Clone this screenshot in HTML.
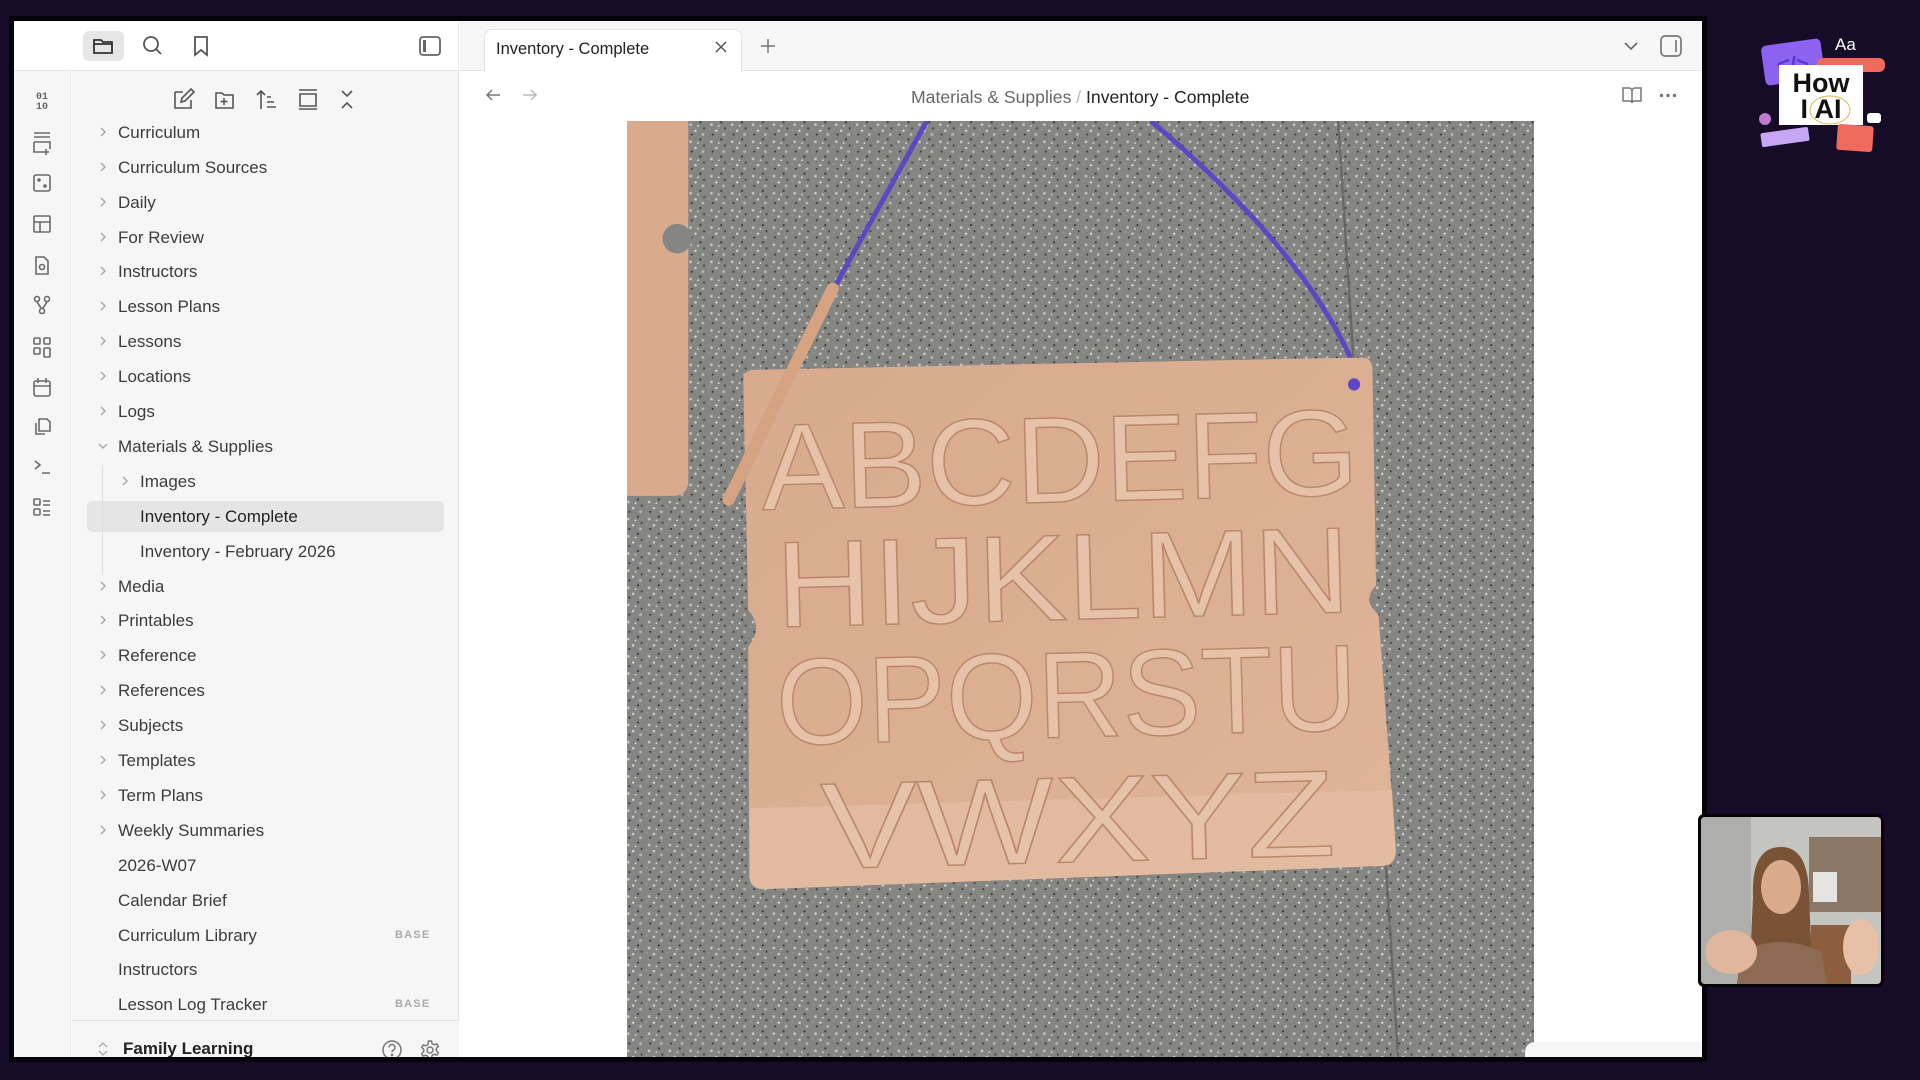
<!DOCTYPE html>
<html><head><meta charset="utf-8"><style>
*{box-sizing:border-box;margin:0;padding:0}
body{width:1920px;height:1080px;background:#170c28;position:relative;overflow:hidden;font-family:"Liberation Sans",sans-serif}
.win{position:absolute;left:14px;top:21px;width:1688px;height:1036px;background:#fff;overflow:hidden;outline:5px solid #050308}
.abs{position:absolute}
.rib{left:0;top:50px;width:57px;height:986px;background:#f6f6f6;border-right:1px solid #e6e6e6}
.side{left:58px;top:50px;width:387px;height:986px;background:#f6f6f6;border-right:1px solid #e4e4e4}
.topl{left:0;top:0;width:445px;height:50px;background:#fff;border-bottom:1px solid #e6e6e6;border-right:1px solid #eee}
.row{position:absolute;left:0;height:35px;line-height:35px;font-size:17px;color:#3c3c3c;white-space:nowrap}
.row svg{position:absolute;top:11px}
.base{position:absolute;left:381px;font-size:11px;color:#aaa;letter-spacing:1.2px;font-weight:bold}
.ic{position:absolute}
</style></head><body>
<div class="win">
 <div class="abs topl"></div>
 <div class="abs" style="left:69px;top:10px;width:41px;height:30px;background:#e6e6e6;border-radius:6px"></div>
 <svg class="ic" style="left:78px;top:14px" width="22" height="22" viewBox="0 0 22 22" fill="none" stroke="#333" stroke-width="1.8"><path d="M2 5h7l2 2h9v11H2z M2 9h18"/></svg>
 <svg class="ic" style="left:127px;top:13px" width="24" height="24" viewBox="0 0 24 24" fill="none" stroke="#555" stroke-width="1.8"><circle cx="10" cy="10" r="7"/><path d="M15 15l5 5"/></svg>
 <svg class="ic" style="left:176px;top:13px" width="22" height="24" viewBox="0 0 22 24" fill="none" stroke="#555" stroke-width="1.8"><path d="M5 3h12v18l-6-5-6 5z"/></svg>
 <svg class="ic" style="left:404px;top:13px" width="24" height="24" viewBox="0 0 24 24" fill="none" stroke="#666" stroke-width="1.8"><rect x="2" y="3" width="20" height="18" rx="3"/><rect x="5" y="6" width="3" height="12" fill="#666" stroke="none"/></svg>
 <div class="abs rib"></div>
 <svg class="ic" style="left:16px;top:64px" width="24" height="460" viewBox="0 0 24 460" fill="none" stroke="#6a6a6a" stroke-width="1.6">
  <text x="12" y="14" font-size="10" text-anchor="middle" fill="#666" stroke="none" font-weight="bold" font-family="Liberation Mono">01</text><text x="12" y="24" font-size="10" text-anchor="middle" fill="#666" stroke="none" font-weight="bold" font-family="Liberation Mono">10</text>
  <path d="M4 48h16M4 52h16M4 57h16v7M4 57v10h9M16 64v6M13 67h6"/>
  <rect x="4" y="90" width="16" height="16" rx="2"/><circle cx="9" cy="95" r="1" fill="#666"/><circle cx="15" cy="101" r="1" fill="#666"/>
  <rect x="4" y="131" width="16" height="16" rx="1"/><path d="M4 137h16M10 137v10"/>
  <path d="M6 172h8l4 4v13H6z"/><circle cx="12" cy="182" r="2.5"/>
  <circle cx="7" cy="214" r="2.5"/><circle cx="17" cy="214" r="2.5"/><circle cx="12" cy="226" r="2.5"/><path d="M7 217l4 6M17 217l-4 6"/>
  <rect x="4" y="253" width="6" height="6" rx="1"/><rect x="14" y="253" width="6" height="6" rx="1"/><rect x="4" y="263" width="6" height="6" rx="1"/><rect x="14" y="263" width="6" height="9" rx="1"/>
  <rect x="4" y="296" width="16" height="15" rx="2"/><path d="M4 301h16M8 293v5M16 293v5"/>
  <path d="M9 334h8l3 3v9H9z M6 338v11h9"/>
  <path d="M5 376l5 4-5 4M12 388h8"/>
  <rect x="4" y="414" width="6" height="6" rx="1"/><rect x="4" y="424" width="6" height="6" rx="1"/><path d="M13 416h7M13 420h7M13 426h7M13 430h7"/>
 </svg>
 <div class="abs side">
  <svg class="ic" style="left:100px;top:16px" width="260" height="24" viewBox="0 0 260 24" fill="none" stroke="#555" stroke-width="1.6">
   <path d="M3 5h8M3 5v16h16v-8M9 15l1-4 9-9 3 3-9 9z"/>
   <path d="M44 6h6l2 2h9v13H44z M52 11v7M48.5 14.5h7"/>
   <path d="M89 4v18M85 8l4-4 4 4M95 10h4M95 15h7M95 20h9"/>
   <path d="M127 3h18M128 7h16v12h-16z M127 22h18"/>
   <path d="M170 4l5 5 5-5M170 21l5-5 5 5"/>
  </svg>
  <div class="abs" style="left:15px;top:430px;width:357px;height:31px;background:#e5e5e5;border-radius:5px"></div>
  <div class="abs" style="left:30px;top:394px;width:1px;height:110px;background:#ddd"></div>
 </div>
 <div class="abs" style="left:58px;top:-21px;width:387px;height:1020px;overflow:hidden">
  <div class="row" style="top:114.8px"><svg style="left:25px" width="12" height="12" viewBox="0 0 12 12"><path d="M4 2l4 4-4 4" stroke="#aaa" fill="none" stroke-width="1.5"/></svg><span style="position:absolute;left:46px">Curriculum</span></div>
  <div class="row" style="top:149.7px"><svg style="left:25px" width="12" height="12" viewBox="0 0 12 12"><path d="M4 2l4 4-4 4" stroke="#aaa" fill="none" stroke-width="1.5"/></svg><span style="position:absolute;left:46px">Curriculum Sources</span></div>
  <div class="row" style="top:184.6px"><svg style="left:25px" width="12" height="12" viewBox="0 0 12 12"><path d="M4 2l4 4-4 4" stroke="#aaa" fill="none" stroke-width="1.5"/></svg><span style="position:absolute;left:46px">Daily</span></div>
  <div class="row" style="top:219.5px"><svg style="left:25px" width="12" height="12" viewBox="0 0 12 12"><path d="M4 2l4 4-4 4" stroke="#aaa" fill="none" stroke-width="1.5"/></svg><span style="position:absolute;left:46px">For Review</span></div>
  <div class="row" style="top:254.4px"><svg style="left:25px" width="12" height="12" viewBox="0 0 12 12"><path d="M4 2l4 4-4 4" stroke="#aaa" fill="none" stroke-width="1.5"/></svg><span style="position:absolute;left:46px">Instructors</span></div>
  <div class="row" style="top:289.3px"><svg style="left:25px" width="12" height="12" viewBox="0 0 12 12"><path d="M4 2l4 4-4 4" stroke="#aaa" fill="none" stroke-width="1.5"/></svg><span style="position:absolute;left:46px">Lesson Plans</span></div>
  <div class="row" style="top:324.2px"><svg style="left:25px" width="12" height="12" viewBox="0 0 12 12"><path d="M4 2l4 4-4 4" stroke="#aaa" fill="none" stroke-width="1.5"/></svg><span style="position:absolute;left:46px">Lessons</span></div>
  <div class="row" style="top:359.1px"><svg style="left:25px" width="12" height="12" viewBox="0 0 12 12"><path d="M4 2l4 4-4 4" stroke="#aaa" fill="none" stroke-width="1.5"/></svg><span style="position:absolute;left:46px">Locations</span></div>
  <div class="row" style="top:394px"><svg style="left:25px" width="12" height="12" viewBox="0 0 12 12"><path d="M4 2l4 4-4 4" stroke="#aaa" fill="none" stroke-width="1.5"/></svg><span style="position:absolute;left:46px">Logs</span></div>
  <div class="row" style="top:428.9px"><svg style="left:25px" width="12" height="12" viewBox="0 0 12 12"><path d="M2 4l4 4 4-4" stroke="#aaa" fill="none" stroke-width="1.5"/></svg><span style="position:absolute;left:46px">Materials &amp; Supplies</span></div>
  <div class="row" style="top:463.8px"><svg style="left:47px" width="12" height="12" viewBox="0 0 12 12"><path d="M4 2l4 4-4 4" stroke="#aaa" fill="none" stroke-width="1.5"/></svg><span style="position:absolute;left:68px">Images</span></div>
  <div class="row" style="top:498.7px;color:#222"><span style="position:absolute;left:68px">Inventory - Complete</span></div>
  <div class="row" style="top:533.6px"><span style="position:absolute;left:68px">Inventory - February 2026</span></div>
  <div class="row" style="top:568.5px"><svg style="left:25px" width="12" height="12" viewBox="0 0 12 12"><path d="M4 2l4 4-4 4" stroke="#aaa" fill="none" stroke-width="1.5"/></svg><span style="position:absolute;left:46px">Media</span></div>
  <div class="row" style="top:603.4px"><svg style="left:25px" width="12" height="12" viewBox="0 0 12 12"><path d="M4 2l4 4-4 4" stroke="#aaa" fill="none" stroke-width="1.5"/></svg><span style="position:absolute;left:46px">Printables</span></div>
  <div class="row" style="top:638.3px"><svg style="left:25px" width="12" height="12" viewBox="0 0 12 12"><path d="M4 2l4 4-4 4" stroke="#aaa" fill="none" stroke-width="1.5"/></svg><span style="position:absolute;left:46px">Reference</span></div>
  <div class="row" style="top:673.2px"><svg style="left:25px" width="12" height="12" viewBox="0 0 12 12"><path d="M4 2l4 4-4 4" stroke="#aaa" fill="none" stroke-width="1.5"/></svg><span style="position:absolute;left:46px">References</span></div>
  <div class="row" style="top:708.1px"><svg style="left:25px" width="12" height="12" viewBox="0 0 12 12"><path d="M4 2l4 4-4 4" stroke="#aaa" fill="none" stroke-width="1.5"/></svg><span style="position:absolute;left:46px">Subjects</span></div>
  <div class="row" style="top:743px"><svg style="left:25px" width="12" height="12" viewBox="0 0 12 12"><path d="M4 2l4 4-4 4" stroke="#aaa" fill="none" stroke-width="1.5"/></svg><span style="position:absolute;left:46px">Templates</span></div>
  <div class="row" style="top:777.9px"><svg style="left:25px" width="12" height="12" viewBox="0 0 12 12"><path d="M4 2l4 4-4 4" stroke="#aaa" fill="none" stroke-width="1.5"/></svg><span style="position:absolute;left:46px">Term Plans</span></div>
  <div class="row" style="top:812.8px"><svg style="left:25px" width="12" height="12" viewBox="0 0 12 12"><path d="M4 2l4 4-4 4" stroke="#aaa" fill="none" stroke-width="1.5"/></svg><span style="position:absolute;left:46px">Weekly Summaries</span></div>
  <div class="row" style="top:847.7px"><span style="position:absolute;left:46px">2026-W07</span></div>
  <div class="row" style="top:882.6px"><span style="position:absolute;left:46px">Calendar Brief</span></div>
  <div class="row" style="top:917.5px;width:387px"><span style="position:absolute;left:46px">Curriculum Library</span><span class="base" style="left:323px">BASE</span></div>
  <div class="row" style="top:952.4px"><span style="position:absolute;left:46px">Instructors</span></div>
  <div class="row" style="top:987.3px;width:387px"><span style="position:absolute;left:46px">Lesson Log Tracker</span><span class="base" style="left:323px">BASE</span></div>
 </div>
 <div class="abs" style="left:58px;top:999px;width:387px;height:37px;background:#f6f6f6;border-top:1px solid #e2e2e2">
  <svg class="ic" style="left:38px;top:20px" width="12" height="16" viewBox="0 0 12 16" fill="none" stroke="#aaa" stroke-width="1.3" transform="translate(-13 0)"><path d="M2 6l4-4 4 4M2 10l4 4 4-4"/></svg>
  <div class="abs" style="left:51px;top:18px;font-size:17px;font-weight:bold;color:#222">Family Learning</div>
  <svg class="ic" style="left:309px;top:18px" width="22" height="22" viewBox="0 0 22 22" fill="none" stroke="#777" stroke-width="1.5"><circle cx="11" cy="11" r="9"/><path d="M8 8.5a3 3 0 1 1 4 2.8c-.8.4-1 1-1 2"/><circle cx="11" cy="16" r=".6" fill="#777"/></svg>
  <svg class="ic" style="left:347px;top:18px" width="22" height="22" viewBox="0 0 22 22" fill="none" stroke="#777" stroke-width="1.5"><circle cx="11" cy="11" r="3"/><path d="M9.5 2h3l.6 2.6 2.2 1.2 2.5-.9 1.5 2.6-2 1.8v2.4l2 1.8-1.5 2.6-2.5-.9-2.2 1.2L12.5 20h-3l-.6-2.6-2.2-1.2-2.5.9-1.5-2.6 2-1.8V10.3l-2-1.8 1.5-2.6 2.5.9 2.2-1.2z"/></svg>
 </div>
 <!-- tab bar -->
 <div class="abs" style="left:446px;top:0;width:1242px;height:50px;background:#f6f6f6;border-bottom:1px solid #e6e6e6"></div>
 <div class="abs" style="left:470px;top:8px;width:258px;height:43px;background:#fff;border:1px solid #e4e4e4;border-bottom:none;border-radius:8px 8px 0 0"></div>
 <div class="abs" style="left:482px;top:19px;font-size:16.5px;color:#222">Inventory - Complete</div>
 <svg class="ic" style="left:700px;top:19px" width="14" height="14" viewBox="0 0 14 14" stroke="#555" stroke-width="1.5"><path d="M2 2l10 10M12 2L2 12"/></svg>
 <svg class="ic" style="left:746px;top:17px" width="16" height="16" viewBox="0 0 16 16" stroke="#777" stroke-width="1.5"><path d="M8 1v14M1 8h14"/></svg>
 <svg class="ic" style="left:1609px;top:18px" width="16" height="14" viewBox="0 0 16 14" fill="none" stroke="#666" stroke-width="1.6"><path d="M2 4l6 6 6-6"/></svg>
 <svg class="ic" style="left:1645px;top:13px" width="24" height="24" viewBox="0 0 24 24" fill="none" stroke="#777" stroke-width="1.7"><rect x="2" y="2" width="20" height="20" rx="4"/><path d="M17 6v12"/></svg>
 <!-- nav row -->
 <svg class="ic" style="left:471px;top:67px" width="16" height="14" viewBox="0 0 16 14" fill="none" stroke="#777" stroke-width="1.5"><path d="M15 7H2M7 2L2 7l5 5"/></svg>
 <svg class="ic" style="left:508px;top:67px" width="16" height="14" viewBox="0 0 16 14" fill="none" stroke="#bbb" stroke-width="1.5"><path d="M1 7h13M9 2l5 5-5 5"/></svg>
 <div class="abs" style="left:897px;top:66px;font-size:17.6px;color:#666;white-space:nowrap">Materials &amp; Supplies <span style="color:#bbb">/</span> <span style="color:#222">Inventory - Complete</span></div>
 <svg class="ic" style="left:1607px;top:64px" width="22" height="20" viewBox="0 0 22 20" fill="none" stroke="#777" stroke-width="1.5"><path d="M2 3h6a3 3 0 0 1 3 3v12a2 2 0 0 0-2-2H2zM20 3h-6a3 3 0 0 0-3 3v12a2 2 0 0 1 2-2h7z"/></svg>
 <svg class="ic" style="left:1645px;top:72px" width="18" height="5" viewBox="0 0 18 5" fill="#777"><circle cx="2.5" cy="2.5" r="1.7"/><circle cx="9" cy="2.5" r="1.7"/><circle cx="15.5" cy="2.5" r="1.7"/></svg>
 <!-- photo -->
 <svg class="abs" style="left:613px;top:100px" width="907" height="936" viewBox="512 99 741 764" preserveAspectRatio="none">
  <defs>
   <pattern id="sp" width="17" height="14" patternUnits="userSpaceOnUse">
    <rect width="17" height="14" fill="#858583"/>
    <circle cx="3" cy="4" r="1.1" fill="#c9c9c6"/><circle cx="11" cy="2" r="0.9" fill="#3a3a3a"/><circle cx="7" cy="9" r="1" fill="#d6d6d2"/><circle cx="14" cy="7" r="0.9" fill="#454545"/><circle cx="4" cy="12" r="0.8" fill="#2f2f2f"/><circle cx="13" cy="12" r="1.1" fill="#bdbdba"/><circle cx="9" cy="5" r="0.7" fill="#e2e2df"/><circle cx="1" cy="8" r="0.8" fill="#999"/>
   </pattern>
   <linearGradient id="wd" x1="0" y1="0" x2="1" y2="1"><stop offset="0" stop-color="#d8aa8d"/><stop offset="1" stop-color="#dfb498"/></linearGradient>
  </defs>
  <rect x="512" y="99" width="741" height="764" fill="url(#sp)"/>
  <path d="M1093 99 L1142 863" stroke="#5c5c5c" stroke-width="2" opacity=".7"/>
  <path d="M512 99 H562 V395 Q560 405 550 405 H512z" fill="#d9aa8c"/>
  <circle cx="553" cy="195" r="12" fill="#858583"/>
  <path d="M757 99 L683 232" stroke="#5b48c2" stroke-width="4"/>
  <path d="M940 99 Q1060 200 1102 290 L1106 318" stroke="#5b48c2" stroke-width="4" fill="none"/>
  <path d="M607 312 Q606 302 617 302 L1112 292 Q1121 292 1121 302 L1124 478 Q1112 490 1126 502 L1140 692 Q1141 706 1130 707 L624 726 Q613 726 612 716 L611 528 Q624 513 611 498 Z" fill="url(#wd)"/>
  <path d="M612 660 L1137 645 L1140 692 Q1141 706 1130 707 L624 726 Q613 726 612 716 Z" fill="#e4bda3" opacity=".8"/>
  <path d="M680 236 L595 408" stroke="#d5a382" stroke-width="10" stroke-linecap="round"/>
  <circle cx="1106" cy="314" r="5" fill="#5b48c2"/>
  <g font-family="Liberation Sans" font-size="100" fill="#e6c2a8" stroke="#bb876a" stroke-width="1.2" transform="rotate(-1.5 870 500)">
   <text x="625" y="410" textLength="488" lengthAdjust="spacingAndGlyphs">ABCDEFG</text>
   <text x="634" y="506" textLength="470" lengthAdjust="spacingAndGlyphs">HIJKLMN</text>
   <text x="632" y="602" textLength="475" lengthAdjust="spacingAndGlyphs">OPQRSTU</text>
   <text x="666" y="704" textLength="420" lengthAdjust="spacingAndGlyphs">VWXYZ</text>
  </g>
 </svg>
 <div class="abs" style="left:1511px;top:1021px;width:177px;height:20px;background:#f6f6f6;border-radius:10px 0 0 0;font-size:14px;color:#666;padding:12px 0 0 12px;overflow:hidden">6 backlinks</div>
</div>
<!-- logo -->
<svg class="abs" style="left:1755px;top:30px" width="130" height="130" viewBox="0 0 130 130">
 <rect x="8" y="12" width="60" height="40" rx="5" fill="#8b63f0" transform="rotate(-8 38 32)"/>
 <text x="22" y="42" font-size="22" font-family="Liberation Sans" font-weight="bold" fill="#5a35d0">&lt;/&gt;</text>
 <rect x="62" y="28" width="68" height="14" rx="6" fill="#ef6a5c"/>
 <text x="80" y="20" font-size="17" fill="#fff" font-family="Liberation Sans">Aa</text>
 <rect x="24" y="35" width="84" height="60" fill="#fff"/>
 <text x="66" y="62" font-size="27" font-weight="bold" text-anchor="middle" fill="#111" font-family="Liberation Sans">How</text>
 <text x="66" y="88" font-size="27" font-weight="bold" text-anchor="middle" fill="#111" font-family="Liberation Sans">I AI</text>
 <ellipse cx="75" cy="80" rx="20" ry="14" fill="none" stroke="#d8b84a" stroke-width="1"/>
 <circle cx="10" cy="89" r="6" fill="#c07ad0"/>
 <rect x="6" y="100" width="48" height="14" rx="2" fill="#c7a7f5" transform="rotate(-8 30 107)"/>
 <rect x="82" y="95" width="36" height="26" rx="3" fill="#ef6a5c" transform="rotate(4 100 108)"/>
 <rect x="112" y="83" width="14" height="10" rx="3" fill="#fff"/>
</svg>
<!-- video -->
<div class="abs" style="left:1698px;top:814px;width:186px;height:173px;background:#050308;border-radius:6px;padding:3px;overflow:hidden">
 <svg width="180" height="167" viewBox="0 0 180 167" preserveAspectRatio="none" style="display:block;border-radius:4px">
  <rect width="180" height="167" fill="#c4c4c0"/>
  <rect x="0" y="0" width="50" height="167" fill="#aeaeaa"/>
  <rect x="108" y="20" width="72" height="75" fill="#8a7765"/>
  <rect x="112" y="55" width="24" height="30" fill="#e5e4e0"/>
  <rect x="110" y="108" width="40" height="59" fill="#8c5e3f"/>
  <path d="M52 80 Q50 30 80 30 Q108 30 108 80 L112 167 H48 Z" fill="#7a5236"/>
  <ellipse cx="80" cy="70" rx="20" ry="27" fill="#d9aa8c"/>
  <path d="M40 135 Q80 115 120 135 L126 167 H36 Z" fill="#8d6a53"/>
  <ellipse cx="30" cy="135" rx="26" ry="22" fill="#e0b79d"/>
  <ellipse cx="160" cy="130" rx="18" ry="28" fill="#e6c1a6"/>
 </svg>
</div>
</body></html>
